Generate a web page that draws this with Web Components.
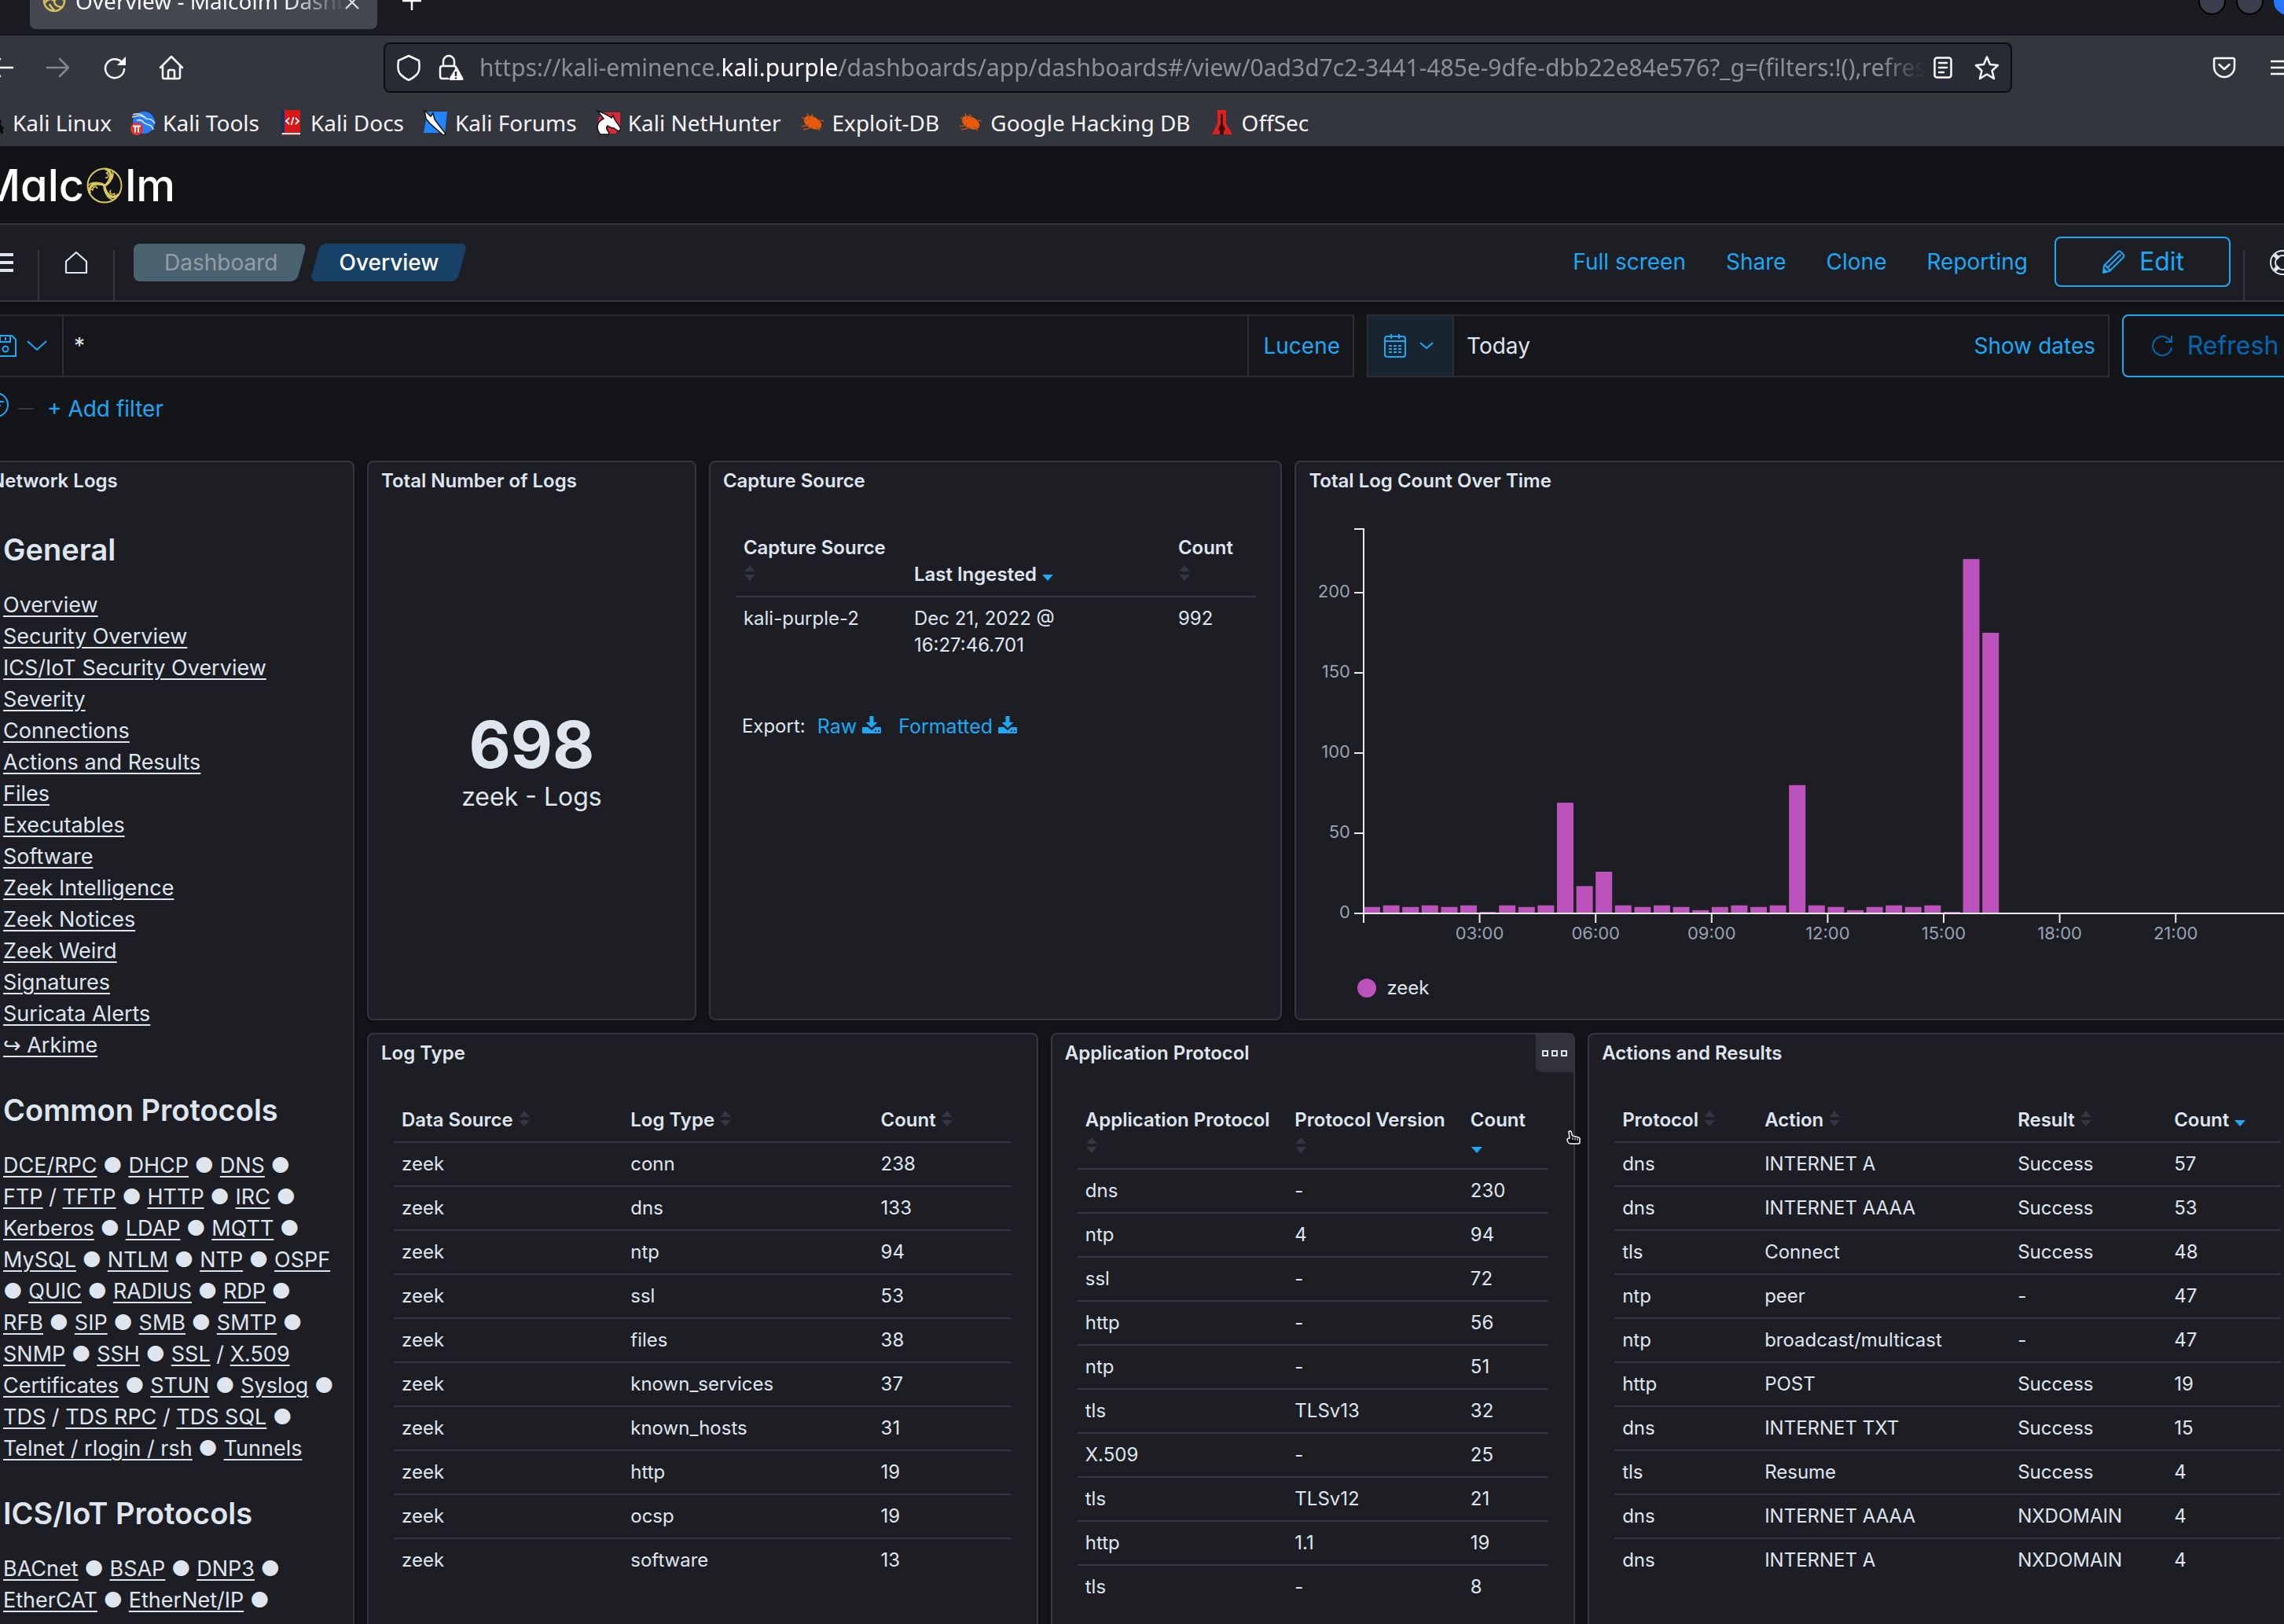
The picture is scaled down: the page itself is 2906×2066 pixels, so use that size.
<!DOCTYPE html>
<html lang="en">
<head>
<meta charset="utf-8">
<title>Overview - Malcolm Dashboards</title>
<style>
html, body { margin: 0; height: 100%; overflow: hidden; background: #141519; }
body { font-family: Inter, "Liberation Sans", sans-serif; font-size: 28px; color: #dfe5ef; }
</style>
</head>
<body>
<browser-window>
  <malcolm-app></malcolm-app>
</browser-window>
<script>
const ARM = '<path stroke-width="3" d="M23 23C18 19 10 20 6 24C3 27 3 31 5 33"/><path stroke-width="1.5" d="M33 5c3 6-1 10-3 13-3 4-5 6-12 4-6-1-12 1-14 6M25 3c4 0 3 4 0 4 5 2 3 7-1 6M32 8c2 5-2 8-3 8"/>';
const ICONS = {
  triskele: [46, 46, `<g fill="none" stroke="#d9c85c"><circle cx="23" cy="23" r="21.5" stroke-width="2"/>${ARM}<g transform="rotate(120 23 23)">${ARM}</g><g transform="rotate(240 23 23)">${ARM}</g></g>`],
  favicon: [30, 30, `<g fill="none" stroke="#d9c257" stroke-width="2.5"><circle cx="15" cy="15" r="13"/><path d="M15 15C10 11 5 14 3 18M15 15c0 5 4 8 9 8M15 15c4-3 5-8 1-12M9 19c1 3 3 5 6 8M20 12c2 0 5 0 7 2"/></g>`],
  close: [18, 18, `<path d="M1 1l16 16M17 1L1 17" stroke="#e4e4e7" stroke-width="2" fill="none"/>`],
  plus: [24, 24, `<path d="M12 0v24M0 12h24" stroke="#fff" stroke-width="2.5" fill="none"/>`],
  back: [32, 32, `<path d="M30 16H3M14 5L3 16l11 11" fill="none" stroke="#fbfbfe" stroke-width="2.5" stroke-linecap="round" stroke-linejoin="round"/>`],
  forward: [32, 32, `<path d="M2 16h27M18 5l11 11-11 11" fill="none" stroke="#85868b" stroke-width="2.5" stroke-linecap="round" stroke-linejoin="round"/>`],
  reload: [32, 32, `<path d="M26 10.500A12 12 0 1 0 28 18" fill="none" stroke="#fbfbfe" stroke-width="2.500" stroke-linecap="round"/><path d="M30 2v11H19z" fill="#fbfbfe"/>`],
  home: [32, 32, `<path d="M2 16L16 2l14 14M5 14v14q0 2 2 2h18q2 0 2-2V14M12 30v-9q0-2 2-2h4q2 0 2 2v9" fill="none" stroke="#fbfbfe" stroke-width="2.500" stroke-linecap="round" stroke-linejoin="round"/>`],
  shield: [32, 34, `<path d="M16 2L29 8q2 14-3 18-5 5-10 7-5-2-10-7Q1 22 3 8z" fill="none" stroke="#fbfbfe" stroke-width="2.500" stroke-linejoin="round"/>`],
  lock: [32, 34, `<path d="M6 15V9a7 7 0 0 1 14 0v6M12 31H5q-3 0-3-3V18q0-3 3-3h14q3 0 3 2" fill="none" stroke="#fbfbfe" stroke-width="2.500" stroke-linecap="round"/><path d="M22 17q1-1.500 2 0l7.500 14q.5 2-1.500 2H15q-2 0-1.500-2z" fill="#fbfbfe"/><path d="M22 22v6M22 29.500v2" stroke="#282a36" stroke-width="2.500"/>`],
  reader: [24, 28, `<rect x="1.500" y="1.500" width="21" height="25" rx="3" fill="none" stroke="#fbfbfe" stroke-width="2.500"/><path d="M7 8h10M7 14h10M7 20h6" stroke="#fbfbfe" stroke-width="2.500" stroke-linecap="round"/>`],
  star: [32, 32, `<path d="M16 2.500l4 9.500 10 1-7.500 7 2.500 10-9-5.500L7 30l2.500-10L2 13l10-1z" fill="none" stroke="#fbfbfe" stroke-width="2.500" stroke-linejoin="round"/>`],
  pocket: [30, 28, `<path d="M4 2h22q2 0 2 2v9a13 13 0 0 1-26 0V4q0-2 2-2z" fill="none" stroke="#fbfbfe" stroke-width="2.500"/><path d="M8.500 10l6.500 6 6.500-6" fill="none" stroke="#fbfbfe" stroke-width="2.500" stroke-linecap="round" stroke-linejoin="round"/>`],
  bars: [26, 20, `<path d="M0 2h26M0 10h26M0 18h26" stroke="#fbfbfe" stroke-width="2.500"/>`],
  kaliDragon: [32, 32, `<path d="M2 2c12 2 18 6 22 14 2 5 4 8 4 14-3-6-5-8-10-10M10 6c8 0 14 4 16 10M14 14c6 2 12 6 15 10" fill="none" stroke="#0a0a0c" stroke-width="2.500"/>`],
  kaliTools: [32, 32, `<circle cx="17" cy="16" r="14" fill="#2a7bf6"/><path d="M2 9c8-3 14-2 18 2 6 0 9 2 11 6M8 13c4-1 7 0 9 3 4 4 10 1 12 9M3 6c7-3 13 0 17 5" fill="none" stroke="#dbe9ff" stroke-width="1.500"/><circle cx="8" cy="24" r="8" fill="#e8322f"/><path d="M3 20.500h10M6 20.500v8M10 20.500v8" stroke="#fff" stroke-width="2"/>`],
  kaliDocs: [32, 32, `<path d="M4 0h24v32H4z" fill="#d81818"/><path d="M4 0h4v29H4z" fill="#17306a"/><path d="M5 29h23v2H5z" fill="#fff"/><path d="M14 10l-4 4 4 4M22 10l4 4-4 4M19.500 9l-3 10" fill="none" stroke="#fff" stroke-width="1.800"/>`],
  kaliForums: [32, 32, `<path d="M6 2h25l-3 27H1z" fill="#2385fb"/><path d="M2 0l8 8 3-4 2 8 6 8 8 10-3 2-8-7-9-8-5-6z" fill="#fff" stroke="#111" stroke-width="1.500"/>`],
  kaliNethunter: [32, 32, `<path d="M6 6Q8 3 12 3H31V22l-6 8H3V12z" fill="#e0263b"/><path d="M2 1c8 3 14 6 18 9l2-4c0 4 3 7 4 9 3 3 4 6 6 9l-3 3-6-4c-4 0-6-2-8-3-3 3 0 6 2 9l-1 2H6C-1 24 2 14 10 11z" fill="#fff" stroke="#111" stroke-width="1.500"/>`],
  bug: [32, 32, `<ellipse cx="16" cy="16" rx="12" ry="7.500" transform="rotate(28 16 16)" fill="#e8590c"/><path d="M9 4l3 8M15 5l2 6M3 9l5 5M2 21l9-2M4 25l12-3M20 20l5 6M25 13l5 1" stroke="#b3521d" stroke-width="1.500"/>`],
  offsec: [32, 32, `<path d="M10 0h11v17l8 14H3l7-14z" fill="#e01f1f"/><path d="M14 6q2-3 3 0v12l3 6-2 3v4h-5v-4l-2-3 3-6z" fill="#400a0a"/>`],
  menu: [32, 24, `<path d="M0 2h32M0 12h32M0 22h32" stroke="#dfe5ef" stroke-width="4"/>`],
  euiHome: [32, 32, `<path d="M16 3L29 14.500V29H3V14.500z" fill="none" stroke="#dfe5ef" stroke-width="2.200" stroke-linejoin="round"/>`],
  pencil: [32, 32, `<path d="M4 21L22 3q1.500-1 3 0l4 4q1 1.500 0 3L11 28l-8 2zM8 24L25.500 6.500M5 20l7 7" fill="none" stroke="#1ba9f5" stroke-width="2" stroke-linejoin="round"/><path d="M3 23l6 6-6 1z" fill="#1ba9f5"/>`],
  help: [32, 32, `<g fill="none" stroke="#dfe5ef" stroke-width="2"><circle cx="16" cy="16" r="15"/><circle cx="16" cy="16" r="9"/></g><path d="M6 6l5 5M26 6l-5 5M6 26l5-5M26 26l-5-5" stroke="#dfe5ef" stroke-width="5"/>`],
  save: [28, 28, `<path d="M1 1h21l5 5v21H1zM7 1v8h13V1M14 3v4" fill="none" stroke="#1ba9f5" stroke-width="2"/><circle cx="14" cy="18" r="3.500" fill="none" stroke="#1ba9f5" stroke-width="2"/>`],
  chevron: [26, 14, `<path d="M1 1l12 11L25 1" fill="none" stroke="#1ba9f5" stroke-width="2"/>`],
  chevronSmall: [18, 10, `<path d="M1 1l8 7 8-7" fill="none" stroke="#1ba9f5" stroke-width="2"/>`],
  calendar: [28, 30, `<rect x="1" y="3" width="26" height="26" rx="3" fill="none" stroke="#1ba9f5" stroke-width="2"/><path d="M1 9h26M9 0v6M19 0v6" stroke="#1ba9f5" stroke-width="2"/><path d="M6 15h16M6 19h16M6 23h16" stroke="#1ba9f5" stroke-width="2" stroke-dasharray="4 2"/>`],
  refresh: [28, 28, `<path d="M25 9A12 12 0 1 0 26 16M26 1v8h-8" fill="none" stroke="#0068b3" stroke-width="2"/>`],
  filter: [32, 32, `<circle cx="16" cy="16" r="15" fill="none" stroke="#1ba9f5" stroke-width="2"/><path d="M8 12h18M11 17h11M14 22h5" stroke="#1ba9f5" stroke-width="2"/>`],
  download: [24, 22, `<path d="M9.500 0h5v8h5L12 15 4.500 8h5zM0 15q0-1 1-1h6l5 4 5-4h6q1 0 1 1v6q0 1-1 1H1q-1 0-1-1z" fill="#1ba9f5"/><path d="M16 19h2M20 19h2" stroke="#1d1e24" stroke-width="1.800"/>`],
  sort: [16, 20, `<path d="M8 0l7 8H1zM8 20l7-8H1z" fill="#343741"/>`],
  sortDown: [16, 20, `<path d="M8 20l7-8H1z" fill="#1ba9f5"/>`],
  boxes: [32, 8, `<path d="M1 1h6v6H1zM13 1h6v6h-6zM25 1h6v6h-6z" fill="none" stroke="#dfe5ef" stroke-width="2"/>`],
  hand: [18, 18, `<path d="M3 1.500q2-1.500 3 0l1.500 5.500 8 2q2 .5 1.500 3v3q0 2-2 2H5q-2 0-3-2l-1-3q0-2 3-2z" fill="#0b0b0d" stroke="#fff" stroke-width="1.500"/><path d="M8 9v3M11 9.500v3M14 10v3" stroke="#fff"/>`]
};

class BaseElement extends HTMLElement {
  connectedCallback() {
    if (this.shadowRoot) return;
    this.attachShadow({ mode: 'open' }).innerHTML =
      `<style>*{box-sizing:border-box}button{font:inherit;color:inherit;background:none;border:0;padding:0;margin:0}a{color:inherit;text-decoration:none}${this.css()}</style>${this.html()}`;
  }
  css() { return ''; }
  html() { return '<slot></slot>'; }
}

customElements.define('ui-icon', class extends BaseElement {
  css() { return ':host{display:inline-flex;flex:none}svg{display:block}'; }
  html() {
    const [w, h, body] = ICONS[this.getAttribute('name')];
    return `<svg width="${w}" height="${h}" viewBox="0 0 ${w} ${h}" aria-hidden="true">${body}</svg>`;
  }
});

customElements.define('tab-strip', class extends BaseElement {
  css() { return `
    :host{display:flex;align-items:flex-end;height:88px;margin-top:-43px;padding:0 0 7px 38px;background:#1b1c21;overflow:hidden;border-bottom:1px solid #121318;flex:none;font-size:28px;line-height:38px}
    .tab{display:flex;align-items:center;width:442px;height:72px;padding:0 23px 0 16px;border-radius:8px;background:#45484f;color:#fbfbfe}
    .title{flex:1;margin:0 0 0 12px;overflow:hidden;white-space:nowrap;-webkit-mask:linear-gradient(90deg,#000 78%,transparent)}
    .new{width:88px;height:72px;display:grid;place-items:center}
    .wins{margin-left:auto;display:flex;gap:13px;height:72px;align-items:center;margin-right:-22px}
    .wins button{width:35px;height:35px;border-radius:50%;background:#3a3d4a;border:2px solid #000}
    .wins .x{background:#2777ff;border-color:#2777ff}`; }
  html() { return `
    <div class="tab"><ui-icon name="favicon"></ui-icon><span class="title">Overview - Malcolm Dashboards</span><button aria-label="Close tab"><ui-icon name="close"></ui-icon></button></div>
    <button class="new" aria-label="New tab"><ui-icon name="plus"></ui-icon></button>
    <div class="wins"><button aria-label="Minimize"></button><button aria-label="Maximize"></button><button class="x" aria-label="Close"></button></div>`; }
});

customElements.define('nav-toolbar', class extends BaseElement {
  css() { return `
    :host{display:flex;align-items:center;height:82px;margin:0 -32px 0 -34px;flex:none}
    button{display:grid;place-items:center;width:72px;height:64px;flex:none}
    .space{width:234px;flex:none}
    .url{flex:1;min-width:0;display:flex;align-items:center;height:64px;padding:0 14px;background:#282a36;border:2px solid #0c0d12;border-radius:8px;font-size:30px;line-height:42px;color:#8d8f98}
    .url ui-icon+ui-icon{margin-left:22px}
    .text{flex:1;min-width:0;overflow:hidden;white-space:nowrap;margin:0 10px 0 20px;outline:0;-webkit-mask:linear-gradient(90deg,#000 97%,transparent)}
    b{font-weight:400;color:#fbfbfe}
    .url .act{width:auto}
    .act+.act{margin-left:28px}`; }
  html() { return `
    <button aria-label="Back"><ui-icon name="back"></ui-icon></button><button aria-label="Forward"><ui-icon name="forward"></ui-icon></button>
    <button aria-label="Reload"><ui-icon name="reload"></ui-icon></button><button aria-label="Home"><ui-icon name="home"></ui-icon></button>
    <span class="space"></span>
    <div class="url"><ui-icon name="shield"></ui-icon><ui-icon name="lock"></ui-icon>
      <div class="text" role="textbox" contenteditable="true" spellcheck="false" aria-label="Address">https://kali-eminence.<b>kali.purple</b>/dashboards/app/dashboards#/view/0ad3d7c2-3441-485e-9dfe-dbb22e84e576?_g=(filters:!(),refresh</div>
      <button class="act" aria-label="Reader view"><ui-icon name="reader"></ui-icon></button><button class="act" aria-label="Bookmark"><ui-icon name="star"></ui-icon></button></div>
    <span class="space"></span>
    <button aria-label="Save to Pocket"><ui-icon name="pocket"></ui-icon></button><button aria-label="Menu"><ui-icon name="bars"></ui-icon></button>`; }
});

customElements.define('bookmark-bar', class extends BaseElement {
  css() { return `
    :host{display:flex;align-items:center;gap:24px;height:59px;margin-left:-25px;padding-bottom:2px;flex:none;font-size:28px;line-height:38px;color:#f4f4f8}
    a{display:flex;align-items:center;gap:9px;white-space:nowrap}`; }
  html() {
    return [['kaliDragon', 'Kali Linux'], ['kaliTools', 'Kali Tools'], ['kaliDocs', 'Kali Docs'], ['kaliForums', 'Kali Forums'], ['kaliNethunter', 'Kali NetHunter'], ['bug', 'Exploit-DB'], ['bug', 'Google Hacking DB'], ['offsec', 'OffSec']]
      .map(([i, t]) => `<a href="#"><ui-icon name="${i}"></ui-icon>${t}</a>`).join('');
  }
});

customElements.define('browser-window', class extends BaseElement {
  css() { return `
    :host{display:flex;flex-direction:column;height:100vh;overflow:hidden}
    .chrome{background:#33363d;border-bottom:2px solid #0f1015;font-family:"Noto Sans","Liberation Sans",sans-serif;flex:none}
    main{flex:1;min-height:0;overflow:hidden}`; }
  html() { return `<div class="chrome"><tab-strip></tab-strip><nav-toolbar></nav-toolbar><bookmark-bar></bookmark-bar></div><main><slot></slot></main>`; }
});

customElements.define('malcolm-logo', class extends BaseElement {
  css() { return `
    :host{display:flex;align-items:center;gap:3px;height:96px;padding-left:21px;background:#131217;color:#fff;font:500 56px/68px Inter,sans-serif;font-feature-settings:"cv11"}`; }
  html() { return `<span>Malc</span><ui-icon name="triskele"></ui-icon><span>lm</span>`; }
});

customElements.define('app-nav', class extends BaseElement {
  css() { return `
    :host{display:flex;align-items:flex-start;height:100px;background:#1d1e24;border:solid #343741;border-width:2px 0;box-shadow:0 4px 8px rgba(0,0,0,.4);line-height:40px;position:relative}
    .sec{width:96px;height:64px;margin-top:32px;display:grid;justify-items:center;align-content:start;border-right:2px solid #343741;flex:none}
    .sec.last{border:0}
    .menu ui-icon{margin-top:4px}
    .crumbs{display:flex;gap:17px;margin:24px 0 0 24px}
    .crumb{position:relative;isolation:isolate;height:48px;display:flex;align-items:center}
    .crumb::before{content:"";position:absolute;inset:0;z-index:-1;border-radius:8px;background:#184167;transform:skewX(-15deg)}
    .crumb.first::before{left:20px;background:#4b6370}
    .crumb.first::after{content:"";position:absolute;z-index:-1;left:0;top:0;bottom:0;width:50%;border-radius:8px 0 0 8px;background:#4b6370}
    .first{padding:0 31px 0 39px;color:#939da4}
    .cur{padding:0 30px;color:#fff;font-weight:500}
    .act{margin-left:auto;display:flex;align-items:center;height:96px;padding:0 16px 2px 0;color:#1ba9f5}
    .act a{margin-right:51px}
    .act a:last-of-type{margin-right:34px}
    .edit{display:flex;align-items:center;justify-content:center;gap:17px;width:224px;height:64px;border:2px solid #1ba9f5;border-radius:8px;font-size:32px}
    .rule{border-left:2px solid #343741;height:64px;margin-top:32px}`; }
  html() { return `
    <button class="sec menu" aria-label="Toggle navigation"><ui-icon name="menu"></ui-icon></button>
    <button class="sec" aria-label="Home"><ui-icon name="euiHome"></ui-icon></button>
    <nav class="crumbs"><a class="crumb first" href="#">Dashboard</a><span class="crumb cur">Overview</span></nav>
    <div class="act"><a href="#">Full screen</a><a href="#">Share</a><a href="#">Clone</a><a href="#">Reporting</a><button class="edit"><ui-icon name="pencil"></ui-icon>Edit</button></div>
    <span class="rule"></span><button class="sec last" aria-label="Help"><ui-icon name="help"></ui-icon></button>`; }
});

customElements.define('query-bar', class extends BaseElement {
  css() { return `
    :host{display:block;line-height:40px;color:#1ba9f5}
    .row{display:flex;gap:16px}
    .box{display:flex;height:80px;background:#16171c;border:2px solid #2d2e33}
    .search{flex:1;min-width:0}
    .saved{display:flex;align-items:center;gap:13px;padding-left:21px;width:109px;border-right:2px solid #2d2e33}
    input{flex:1;min-width:0;background:none;border:0;outline:0;padding:0 13px;font:inherit;color:#dfe5ef}
    .lang{padding:0 16px 0 18px;border-left:2px solid #2d2e33}
    .picker{width:945px}
    .cal{display:flex;align-items:center;gap:17px;padding:0 24px 0 20px;width:109px;border-right:2px solid #2d2e33;background:#182530}
    .today{flex:1;text-align:left;padding:0 16px;color:#dfe5ef}
    .show{padding-right:16px}
    .refresh{display:flex;align-items:center;justify-content:center;gap:18px;width:236px;height:80px;border:2px solid #1ba9f5;border-radius:8px;font-size:32px;color:#0068b3;background:none}
    .filters{display:flex;align-items:center;height:48px;margin-top:16px;padding-left:9px;gap:12px}
    .filters i{width:20px;height:2px;background:#343741}
    .filters .add{margin-left:5px}`; }
  html() { return `
    <div class="row">
      <div class="box search"><button class="saved" aria-label="Saved queries"><ui-icon name="save"></ui-icon><ui-icon name="chevron"></ui-icon></button><input aria-label="Search" value="*"><button class="lang">Lucene</button></div>
      <div class="box picker"><button class="cal" aria-label="Quick time ranges"><ui-icon name="calendar"></ui-icon><ui-icon name="chevronSmall"></ui-icon></button><button class="today">Today</button><button class="show">Show dates</button></div>
      <button class="refresh"><ui-icon name="refresh"></ui-icon>Refresh</button>
    </div>
    <div class="filters"><button aria-label="Filter options"><ui-icon name="filter"></ui-icon></button><i></i><button class="add">+ Add filter</button></div>`; }
});

customElements.define('dash-panel', class extends BaseElement {
  css() { return `
    :host{display:flex;flex-direction:column;min-width:0;background:#1d1e24;border:2px solid #343741;border-radius:8px;overflow:hidden;box-shadow:0 2px 6px rgba(0,0,0,.3)}
    header{display:flex;height:48px;align-items:center;flex:none}
    h2{flex:1;margin:0;padding-left:16px;font-size:24px;font-weight:600;line-height:36px}
    button{width:48px;height:48px;display:grid;place-items:center;background:#31323b;border-radius:0 6px 0 8px}
    .body{flex:1;min-height:0;padding:34px 32px 0}`; }
  html() { return `<header><h2>${this.getAttribute('heading')}</h2>${this.hasAttribute('menu') ? '<button aria-label="Panel options"><ui-icon name="boxes"></ui-icon></button>' : ''}</header><div class="body"><slot></slot></div>`; }
});

const NAV = [
  ['General', ['Overview', 'Security Overview', 'ICS/IoT Security Overview', 'Severity', 'Connections', 'Actions and Results', 'Files', 'Executables', 'Software', 'Zeek Intelligence', 'Zeek Notices', 'Zeek Weird', 'Signatures', 'Suricata Alerts', '<span>↪</span> Arkime']],
  ['Common Protocols', ['DCE/RPC ● DHCP ● DNS ●', 'FTP~TFTP ● HTTP ● IRC ●', 'Kerberos ● LDAP ● MQTT ●', 'MySQL ● NTLM ● NTP ● OSPF', '● QUIC ● RADIUS ● RDP ●', 'RFB ● SIP ● SMB ● SMTP ●', 'SNMP ● SSH ● SSL~X.509', 'Certificates ● STUN ● Syslog ●', 'TDS~TDS RPC~TDS SQL ●', 'Telnet / rlogin / rsh ● Tunnels']],
  ['ICS/IoT Protocols', ['BACnet ● BSAP ● DNP3 ●', 'EtherCAT ● EtherNet/IP ●']]
];
customElements.define('nav-links', class extends BaseElement {
  css() { return `
    :host{display:block;white-space:nowrap;font-size:27px;line-height:40px;margin-top:6px}
    h3{margin:0 0 28px;font-size:38px;font-weight:600;line-height:46px}
    p{margin:0 0 39px}
    a{text-decoration:underline;text-decoration-thickness:2px;text-underline-offset:4px}
    span{font-family:"DejaVu Sans",sans-serif;line-height:1}`; }
  html() {
    const line = l => l.split('●').map(part => part.split('~')
      .map(t => t.trim() ? `<a href="#">${t.trim()}</a>` : '').join(' / ')).join(' ● ').trim();
    return NAV.map(([h, ls]) => `<h3>${h}</h3><p>${ls.map(line).join('<br>')}</p>`).join('');
  }
});

customElements.define('metric-value', class extends BaseElement {
  css() { return `
    :host{display:flex;flex-direction:column;align-items:center;justify-content:center;height:100%;padding-bottom:22px}
    strong{font-size:82px;line-height:84px;font-weight:700}
    span{font-size:32px;line-height:48px}`; }
  html() { return `<strong>${this.getAttribute('value')}</strong><span>${this.getAttribute('label')}</span>`; }
});

const TABLES = {
  capture: { cols: [['Capture Source', 217], ['Last Ingested', 336, 1], ['Count', 109]], rows: [['kali-purple-2', 'Dec 21, 2022 @<br>16:27:46.701', '992']] },
  logType: { cols: [['Data Source', 291], ['Log Type', 318], ['Count', 176]],
    rows: [['conn', 238], ['dns', 133], ['ntp', 94], ['ssl', 53], ['files', 38], ['known_services', 37], ['known_hosts', 31], ['http', 19], ['ocsp', 19], ['software', 13]].map(r => ['zeek', ...r]) },
  appProtocol: { cols: [['Application Protocol', 266], ['Protocol Version', 223], ['Count', 109, 1]],
    rows: [['dns', '-', 230], ['ntp', 4, 94], ['ssl', '-', 72], ['http', '-', 56], ['ntp', '-', 51], ['tls', 'TLSv13', 32], ['X.509', '-', 25], ['tls', 'TLSv12', 21], ['http', '1.1', 19], ['tls', '-', 8]] },
  actions: { cols: [['Protocol', 181], ['Action', 322], ['Result', 199], ['Count', 146, 1]],
    rows: [['dns', 'INTERNET A', 'Success', 57], ['dns', 'INTERNET AAAA', 'Success', 53], ['tls', 'Connect', 'Success', 48], ['ntp', 'peer', '-', 47], ['ntp', 'broadcast/multicast', '-', 47], ['http', 'POST', 'Success', 19], ['dns', 'INTERNET TXT', 'Success', 15], ['tls', 'Resume', 'Success', 4], ['dns', 'INTERNET AAAA', 'NXDOMAIN', 4], ['dns', 'INTERNET A', 'NXDOMAIN', 4]] }
};
customElements.define('data-table', class extends BaseElement {
  css() { return `
    :host{display:block;font-size:24px;line-height:34px}
    table{width:100%;table-layout:fixed;border-collapse:separate;border-spacing:0}
    th,td{padding:10px;text-align:left;vertical-align:top;border-bottom:2px solid #343741}
    th{vertical-align:bottom;font-weight:600}
    th button{display:block;text-align:left}
    tr:last-child td{border-bottom:0}`; }
  html() {
    const t = TABLES[this.getAttribute('source')];
    return `<table><colgroup>${t.cols.map(c => `<col style="width:${c[1]}px">`).join('')}</colgroup><thead><tr>${t.cols.map(c => `<th scope="col"${c[2] ? ' aria-sort="descending"' : ''}><button>${c[0]} <ui-icon name="${c[2] ? 'sortDown' : 'sort'}"></ui-icon></button></th>`).join('')}</tr></thead><tbody>${t.rows.map(r => `<tr>${r.map(v => `<td>${v}</td>`).join('')}</tr>`).join('')}</tbody></table>`;
  }
});

customElements.define('export-links', class extends BaseElement {
  css() { return `
    :host{display:flex;margin:59px 0 0 8px;font-size:24px;line-height:34px}
    a{display:flex;align-items:center;gap:7px;color:#1ba9f5;font-size:25px;margin-left:15px}
    a+a{margin-left:22px}
    ui-icon{margin-bottom:4px}`; }
  html() { return `<span>Export:</span><a href="#">Raw<ui-icon name="download"></ui-icon></a><a href="#">Formatted<ui-icon name="download"></ui-icon></a>`; }
});

customElements.define('log-chart', class extends BaseElement {
  css() { return `
    :host{display:block;margin:-34px -32px 0;font-size:24px;line-height:34px}
    svg{display:block;width:100%;height:590px}
    .legend{display:flex;align-items:center;gap:13px;margin:14px 0 0 78px}
    .legend i{width:24px;height:24px;border-radius:50%;background:#bc52bc}`; }
  html() {
    const data = [4, 5, 4, 5, 4, 5, 1, 5, 4, 5, 69, 17, 26, 5, 4, 5, 4, 2, 4, 5, 4, 5, 80, 5, 4, 2, 4, 5, 4, 5, 1, 221, 175];
    const x0 = 86, y0 = 526, step = 24.6, k = 2.04;
    const bars = data.map((v, i) => `<rect x="${(x0 + i * step).toFixed(1)}" y="${(y0 - v * k).toFixed(1)}" width="21" height="${(v * k).toFixed(1)}"/>`).join('');
    const yt = [0, 50, 100, 150, 200].map(v => `<path d="M${x0 - 12} ${y0 - v * k}h12" stroke="#eaeaea" stroke-width="2"/><text x="${x0 - 17}" y="${y0 - v * k + 6}" text-anchor="end">${v}</text>`).join('');
    const xt = [3, 6, 9, 12, 15, 18, 21].map(h => { const x = x0 + h * 2 * step; return `<path d="M${x} ${y0}v12" stroke="#eaeaea" stroke-width="2"/><text x="${x}" y="${y0 + 33}" text-anchor="middle">${String(h).padStart(2, '0')}:00</text>`; }).join('');
    return `<svg role="img" aria-label="Total log count over time"><g fill="#bc52bc">${bars}</g>
      <path d="M${x0 - 12} 37h12V${y0 + 12}M${x0} ${y0}h1181" fill="none" stroke="#eaeaea" stroke-width="2"/>
      <g fill="#98a2b3" font-size="22">${yt}${xt}</g></svg><div class="legend"><i></i>zeek</div>`;
  }
});

customElements.define('dash-grid', class extends BaseElement {
  css() { return `:host{display:grid;grid-template-columns:repeat(48,minmax(0,1fr));grid-template-rows:712px 880px;gap:16px;margin-top:42px}`; }
});

customElements.define('malcolm-app', class extends BaseElement {
  css() { return `
    :host{display:block;margin:0 -46px}
    .page{padding:16px}
    .w7{grid-column:span 7}.w11{grid-column:span 11}.w12{grid-column:span 12}.w14{grid-column:span 14}.w15{grid-column:span 15}.w21{grid-column:span 21}
    .side{grid-column:span 8;grid-row:span 2}
    .cursor{position:absolute;left:1993px;top:1438px}`; }
  html() { return `
    <malcolm-logo></malcolm-logo>
    <app-nav></app-nav>
    <div class="page">
      <query-bar></query-bar>
      <dash-grid>
        <dash-panel heading="Network Logs" class="side"><nav-links></nav-links></dash-panel>
        <dash-panel heading="Total Number of Logs" class="w7"><metric-value value="698" label="zeek - Logs"></metric-value></dash-panel>
        <dash-panel heading="Capture Source" class="w12"><data-table source="capture"></data-table><export-links></export-links></dash-panel>
        <dash-panel heading="Total Log Count Over Time" class="w21"><log-chart></log-chart></dash-panel>
        <dash-panel heading="Log Type" class="w14"><data-table source="logType"></data-table></dash-panel>
        <dash-panel heading="Application Protocol" menu class="w11"><data-table source="appProtocol"></data-table></dash-panel>
        <dash-panel heading="Actions and Results" class="w15"><data-table source="actions"></data-table></dash-panel>
      </dash-grid>
    </div>
    <ui-icon class="cursor" name="hand"></ui-icon>`; }
});
</script>
</body>
</html>
